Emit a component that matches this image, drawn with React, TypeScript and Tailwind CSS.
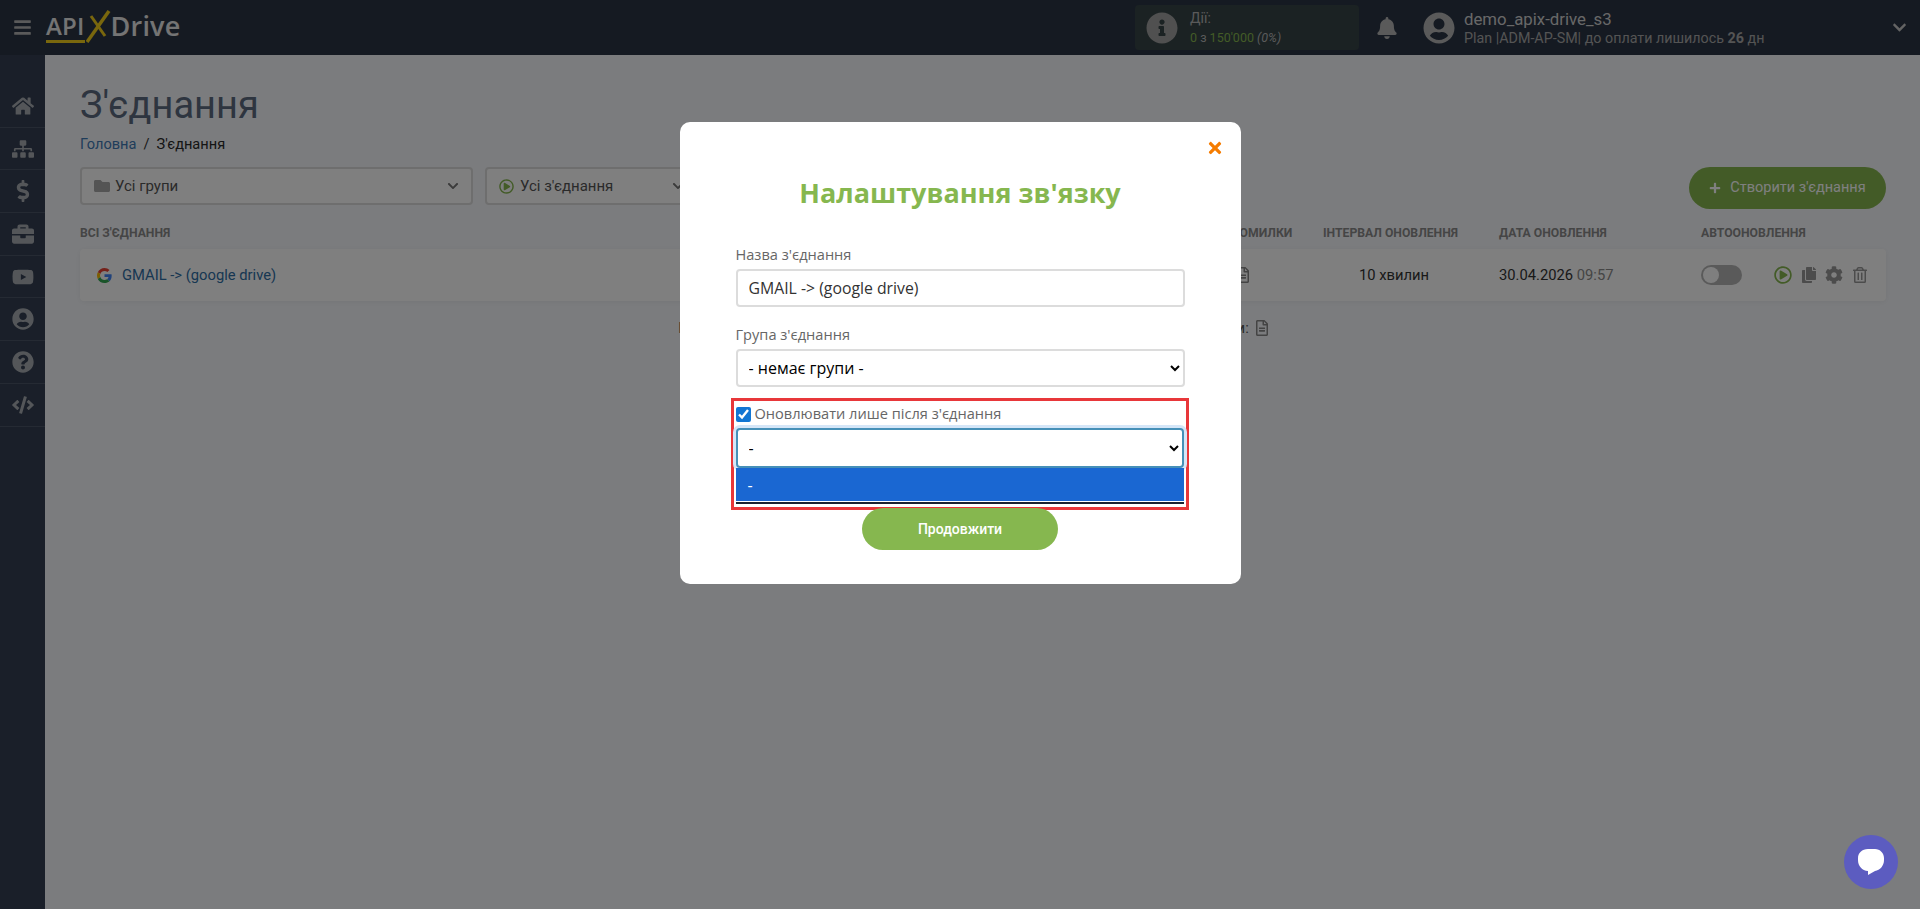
import { FaBars, FaBell, FaBriefcase, FaChevronDown, FaCode, FaCog, FaDollarSign, FaFolder, FaHome, FaInfoCircle, FaPlus, FaQuestionCircle, FaSitemap, FaTimes, FaUserCircle, FaYoutube, FaCopy, FaRegTrashAlt, FaRegFileAlt, FaRegPlayCircle } from "react-icons/fa";

const sideItems = [FaHome, FaSitemap, FaDollarSign, FaBriefcase, FaYoutube, FaUserCircle, FaQuestionCircle, FaCode];

function GoogleIcon() {
  return (
    <svg width="15" height="15" viewBox="0 0 48 48">
      <path fill="#EA4335" d="M24 9.500c3.500 0 6.700 1.200 9.200 3.600l6.900-6.900C35.900 2.400 30.500 0 24 0 14.600 0 6.500 5.400 2.600 13.200l8 6.200C12.500 13.600 17.800 9.500 24 9.500z" />
      <path fill="#4285F4" d="M46.900 24.500c0-1.600-.1-3.100-.4-4.500H24v9h12.900c-.6 3-2.200 5.500-4.700 7.200l7.700 6c4.500-4.200 7-10.300 7-17.700z" />
      <path fill="#FBBC05" d="M10.600 28.600c-.5-1.400-.8-3-.8-4.600s.3-3.200.8-4.600l-8-6.200C.9 16.500 0 20.100 0 24s.9 7.500 2.600 10.800l8-6.200z" />
      <path fill="#34A853" d="M24 48c6.500 0 11.900-2.100 15.900-5.800l-7.700-6c-2.200 1.400-4.900 2.300-8.200 2.300-6.200 0-11.500-4.100-13.400-9.900l-8 6.200C6.500 42.600 14.600 48 24 48z" />
    </svg>
  );
}

function Header() {
  return (
    <header className="h-[55px] shrink-0 bg-[#2b3545] flex items-center text-white">
      <div className="w-[45px] flex justify-center text-[#b5b5b5]">
        <FaBars size={19} />
      </div>
      <div className="flex items-center w-[150px] pb-[4px] font-['Open_Sans',sans-serif] font-semibold text-[24px] leading-none tracking-[0.2px] pl-[1px] text-[#e8e8e8]">
        <span className="relative">
          API
          <span className="absolute left-0 right-0 -bottom-[5px] h-[3px] bg-[#f2ce1b]" />
        </span>
        <svg width="26" height="33" viewBox="0 0 26 33" className="ml-[1px] mt-[2px] -mr-[1px] shrink-0">
          <path d="M1 32 L23 1" stroke="#f2ce1b" strokeWidth="3.500" fill="none" />
          <path d="M5 6 L19 26" stroke="#f2ce1b" strokeWidth="3" fill="none" />
        </svg>
        <span className="text-[27px]">Drive</span>
      </div>

      <div className="ml-auto flex items-center font-['Roboto',sans-serif]">
        <div className="w-[224px] h-[45px] rounded-[4px] bg-[#364446] flex items-center pl-[11px] gap-[12px]">
          <FaInfoCircle size={32} className="text-[#a0a0a0]" />
          <div className="text-[12.500px] leading-[19px]">
            <div className="text-[#b5b5b5] text-[14px]">Дії:</div>
            <div className="text-[#86b74f]">
              0 <span className="text-[#b5b5b5]">з</span> 150'000 <span className="italic text-[#b5b5b5]">(0%)</span>
            </div>
          </div>
        </div>
        <FaBell size={22} className="text-[#b5b5b5] ml-[17px]" />
        <FaUserCircle size={32} className="text-[#b5b5b5] ml-[25px]" />
        <div className="ml-[9px] w-[428px]">
          <div className="text-[16.800px] leading-[20px] text-[#d0d0d0]">demo_apix-drive_s3</div>
          <div className="text-[14.300px] leading-[17px] mt-[1px] text-[#a8a8a8]">
            Plan |ADM-AP-SM| до оплати лишилось <b>26</b> дн
          </div>
        </div>
        <FaChevronDown size={15} className="text-[#c8c8c8] mr-[13px]" />
      </div>
    </header>
  );
}

function Sidebar() {
  return (
    <aside className="w-[45px] shrink-0 bg-[#343f52] pt-[30px]">
      {sideItems.map((Icon, i) => (
        <div key={i} className="h-[42.700px] flex items-center justify-center border-b border-[#4a5566] text-[#a9adb3]">
          <Icon size={22} />
        </div>
      ))}
    </aside>
  );
}

function Connections() {
  return (
    <main className="flex-1 min-w-0 pl-[35px] pr-[34px] pt-[25px] font-['Roboto',sans-serif] text-[#4a4a4a]">
      <h1 className="text-[38px] leading-[50px] text-[#5c6b80]">З'єднання</h1>
      <div className="mt-[4px] text-[14.600px] leading-[20px] flex gap-[7px]">
        <span className="text-[#3f7ab5]">Головна</span>
        <span className="text-[#333]">/</span>
        <span className="text-[#2a2a2a]">З'єднання</span>
      </div>

      <div className="mt-[13px] flex items-start">
        <div className="w-[393px] h-[38px] border-2 border-[#dcdcdc] rounded-[4px] bg-white flex items-center pl-[12px] pr-[12px] text-[15px] text-[#555]">
          <FaFolder size={16} className="text-[#a8a8a8] mr-[5px]" />
          Усі групи
          <FaChevronDown size={12} className="ml-auto text-[#777]" />
        </div>
        <div className="ml-[12px] w-[213px] h-[38px] border-2 border-[#dcdcdc] rounded-[4px] bg-white flex items-center pl-[12px] pr-[12px] text-[15px] text-[#555]">
          <FaRegPlayCircle size={15} className="text-[#86b74f] mr-[6px]" />
          Усі з'єднання
          <FaChevronDown size={12} className="ml-auto text-[#777]" />
        </div>
        <div className="ml-auto w-[197px] h-[42px] rounded-full bg-[#86b74f] flex items-center justify-center gap-[9px] text-[14.500px] text-white">
          <FaPlus size={12} />
          Створити з'єднання
        </div>
      </div>

      <div className="mt-[16px] h-[16px] flex items-center text-[12.200px] font-bold text-[#8a8a8a] leading-none">
        <div className="flex-1">ВСІ З'ЄДНАННЯ</div>
        <div className="w-[92px]">ПОМИЛКИ</div>
        <div className="w-[176px]">ІНТЕРВАЛ ОНОВЛЕННЯ</div>
        <div className="w-[202px]">ДАТА ОНОВЛЕННЯ</div>
        <div className="w-[185px]">АВТООНОВЛЕННЯ</div>
      </div>

      <div className="mt-[8px] h-[52px] rounded-[4px] bg-white shadow-[0_1px_6px_rgba(0,0,0,0.06)] flex items-center text-[14.750px]">
        <div className="flex-1 flex items-center pl-[17px] gap-[10px] text-[#2f6ea5]">
          <GoogleIcon />
          GMAIL -&gt; (google drive)
        </div>
        <div className="w-[92px] text-[#888]">
          <FaRegFileAlt size={16} className="ml-[4px]" />
        </div>
        <div className="w-[176px] pl-[36px] text-[#333]">10 хвилин</div>
        <div className="w-[202px] text-[#333]">
          30.04.2026 <span className="text-[#8a8a8a]">09:57</span>
        </div>
        <div className="w-[185px] flex items-center">
          <div className="w-[41px] h-[20px] rounded-full bg-[#b5b5b5] flex items-center p-[2px]">
            <div className="w-[16px] h-[16px] rounded-full bg-white" />
          </div>
          <FaRegPlayCircle size={18} className="ml-[32px] text-[#86b74f]" />
          <FaCopy size={16} className="ml-[9px] text-[#999]" />
          <FaCog size={18} className="ml-[8px] text-[#999]" />
          <FaRegTrashAlt size={16} className="ml-[9px] text-[#999]" />
        </div>
      </div>

      <div className="mt-[16px] flex justify-center items-center text-[15px] text-[#555] pr-[18px]">
        <span>Експорт та автоматичне оновлення всіх ваших цих з'єднань за цим посиланням:</span>
        <FaRegFileAlt size={16} className="ml-[5px] text-[#888]" />
      </div>
    </main>
  );
}

function ConnectionModal() {
  return (
    <div className="fixed inset-0 bg-black/50 flex justify-center pt-[122px] font-['Open_Sans',sans-serif]">
      <div className="relative w-[561px] h-[462px] rounded-[10px] bg-white px-[56px] pt-[52px]">
        <FaTimes size={18} className="absolute top-[17px] right-[17px] text-[#f57c00]" />
        <h2 className="text-center text-[27px] leading-[38px] font-bold text-[#86b74f]">Налаштування зв'язку</h2>

        <label className="block mt-[32px] text-[14.600px] leading-[20px] text-[#666]">Назва з'єднання</label>
        <input
          readOnly
          value="GMAIL -> (google drive)"
          className="block mt-[5px] w-full h-[38px] px-[11px] border-2 border-[#dcdcdc] rounded-[4px] text-[15.800px] text-[#333] bg-white outline-none font-['Open_Sans',sans-serif]"
        />

        <label className="block mt-[17px] text-[14.600px] leading-[20px] text-[#666]">Група з'єднання</label>
        <select className="block mt-[5px] w-full h-[38px] px-[7px] border-2 border-[#dcdcdc] rounded-[4px] text-[16px] text-black bg-white outline-none font-['Open_Sans',sans-serif]">
          <option>- немає групи -</option>
        </select>

        <div className="mt-[11px] -mx-[5px] w-[458px] h-[112px] border-[3px] border-[#e8373a] px-[2px] pt-[3px]">
          <label className="flex items-center h-[20px] text-[14.600px] text-[#666]">
            <input type="checkbox" readOnly checked className="w-[15px] h-[15px] m-0 mr-[4px] accent-[#1276d3]" />
            Оновлювати лише після з'єднання
          </label>
          <select className="block mt-[4px] w-full h-[40px] px-[7px] border-2 border-[#4690b8] rounded-[4px] text-[16px] text-black bg-white outline-none shadow-[0_0_0_3px_#d5e6f8] font-['Open_Sans',sans-serif]">
            <option>-</option>
          </select>
          <div className="relative h-[36px] bg-[#1a67d2] border-b-[2px] border-[#1a2230] shadow-[inset_0_-1px_0_#ffffff] pl-[12px] pt-[5px] text-[16px] text-white leading-[24px]">-</div>
        </div>

        <button className="block mx-auto -mt-[2px] w-[196px] h-[42px] rounded-full bg-[#86b74f] text-white text-[14px] font-medium font-['Roboto',sans-serif]">
          Продовжити
        </button>
      </div>
    </div>
  );
}

function ChatBubble() {
  return (
    <div className="fixed right-[22px] bottom-[20px] w-[54px] h-[54px] rounded-full bg-[#5c5cc0] flex items-center justify-center">
      <svg width="28" height="28" viewBox="0 0 28 28">
        <path fill="#fff" d="M11 1h7c5 0 9 4 9 9v2c0 6-4 10-9 11l-7 4v-4c-6-.5-10-5-10-11v-2c0-5 4-9 10-9z" />
      </svg>
    </div>
  );
}

export default function App() {
  return (
    <div className="w-[1920px] h-[909px] overflow-hidden flex flex-col bg-[#f7f9fd]">
      <Header />
      <div className="flex flex-1 min-h-0">
        <Sidebar />
        <Connections />
      </div>
      <ConnectionModal />
      <ChatBubble />
    </div>
  );
}
